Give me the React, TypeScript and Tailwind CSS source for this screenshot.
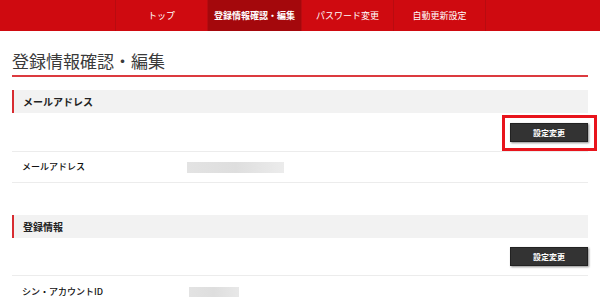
import React from "react";

const font = { fontFamily: '"Noto Sans CJK JP", "Noto Sans", sans-serif' };

function NavItem({ label, active, last }: { label: string; active?: boolean; last?: boolean }) {
  return (
    <div
      className={`flex items-center justify-center h-full border-l border-[#b90b10] ${last ? "border-r" : ""} ${
        active ? "bg-[#a4080c] font-bold" : ""
      } text-white text-[9px]`}
    >
      {label}
    </div>
  );
}

function SectionHeader({ title }: { title: string }) {
  return (
    <div className="h-[23px] bg-[#f2f2f2] border-l-2 border-[#d82c31] flex items-center pl-[9px] text-[10px] font-bold text-[#222]">
      {title}
    </div>
  );
}

function Button({ highlight }: { highlight?: boolean }) {
  return (
    <div className="relative">
      <div className="w-[78px] h-[19px] bg-[#333] border border-[#222] shadow-[1px_1px_2px_rgba(0,0,0,0.45)] flex items-center justify-center text-white text-[8px] font-bold">
        設定変更
      </div>
      {highlight && (
        <div className="absolute left-[-8px] top-[-8px] w-[95px] h-[36px] border-[3px] border-[#e8141c]" />
      )}
    </div>
  );
}

export default function App() {
  return (
    <div className="w-[600px] h-[306px] bg-white overflow-hidden" style={font}>
      <div className="h-[31px] bg-[#cf0a10] flex pl-[115px]">
        <div className="w-[92px]"><NavItem label="トップ" /></div>
        <div className="w-[94px]"><NavItem label="登録情報確認・編集" active /></div>
        <div className="w-[92px]"><NavItem label="パスワード変更" /></div>
        <div className="w-[93px]"><NavItem label="自動更新設定" last /></div>
      </div>
      <div className="px-[12px]">
        <div className="pt-[20px] pb-[4px] border-b-2 border-[#dc3a3f] text-[17px] leading-[20px] text-[#3a3a3a]">
          登録情報確認・編集
        </div>

        <div className="mt-[13px]">
          <SectionHeader title="メールアドレス" />
          <div className="flex justify-end pt-[10px] pb-[9px] border-b border-[#ececec]">
            <Button highlight />
          </div>
          <div className="h-[31px] flex items-center border-b border-[#ececec] text-[9px] font-medium text-[#111]">
            <div className="w-[175px] pl-[10px]">メールアドレス</div>
            <div className="w-[97px] h-[11px] bg-gradient-to-r from-[#e3e3e3] via-[#dedede] to-[#ececec] blur-[0.5px]" />
          </div>
        </div>

        <div className="mt-[32px]">
          <SectionHeader title="登録情報" />
          <div className="flex justify-end pt-[9px] pb-[9px] border-b border-[#ececec]">
            <Button />
          </div>
          <div className="h-[31px] flex items-center text-[9px] font-medium text-[#111]">
            <div className="w-[177px] pl-[10px]">シン・アカウントID</div>
            <div className="w-[50px] h-[10px] bg-gradient-to-r from-[#e3e3e3] via-[#dedede] to-[#e8e8e8] blur-[0.5px]" />
          </div>
        </div>
      </div>
    </div>
  );
}
